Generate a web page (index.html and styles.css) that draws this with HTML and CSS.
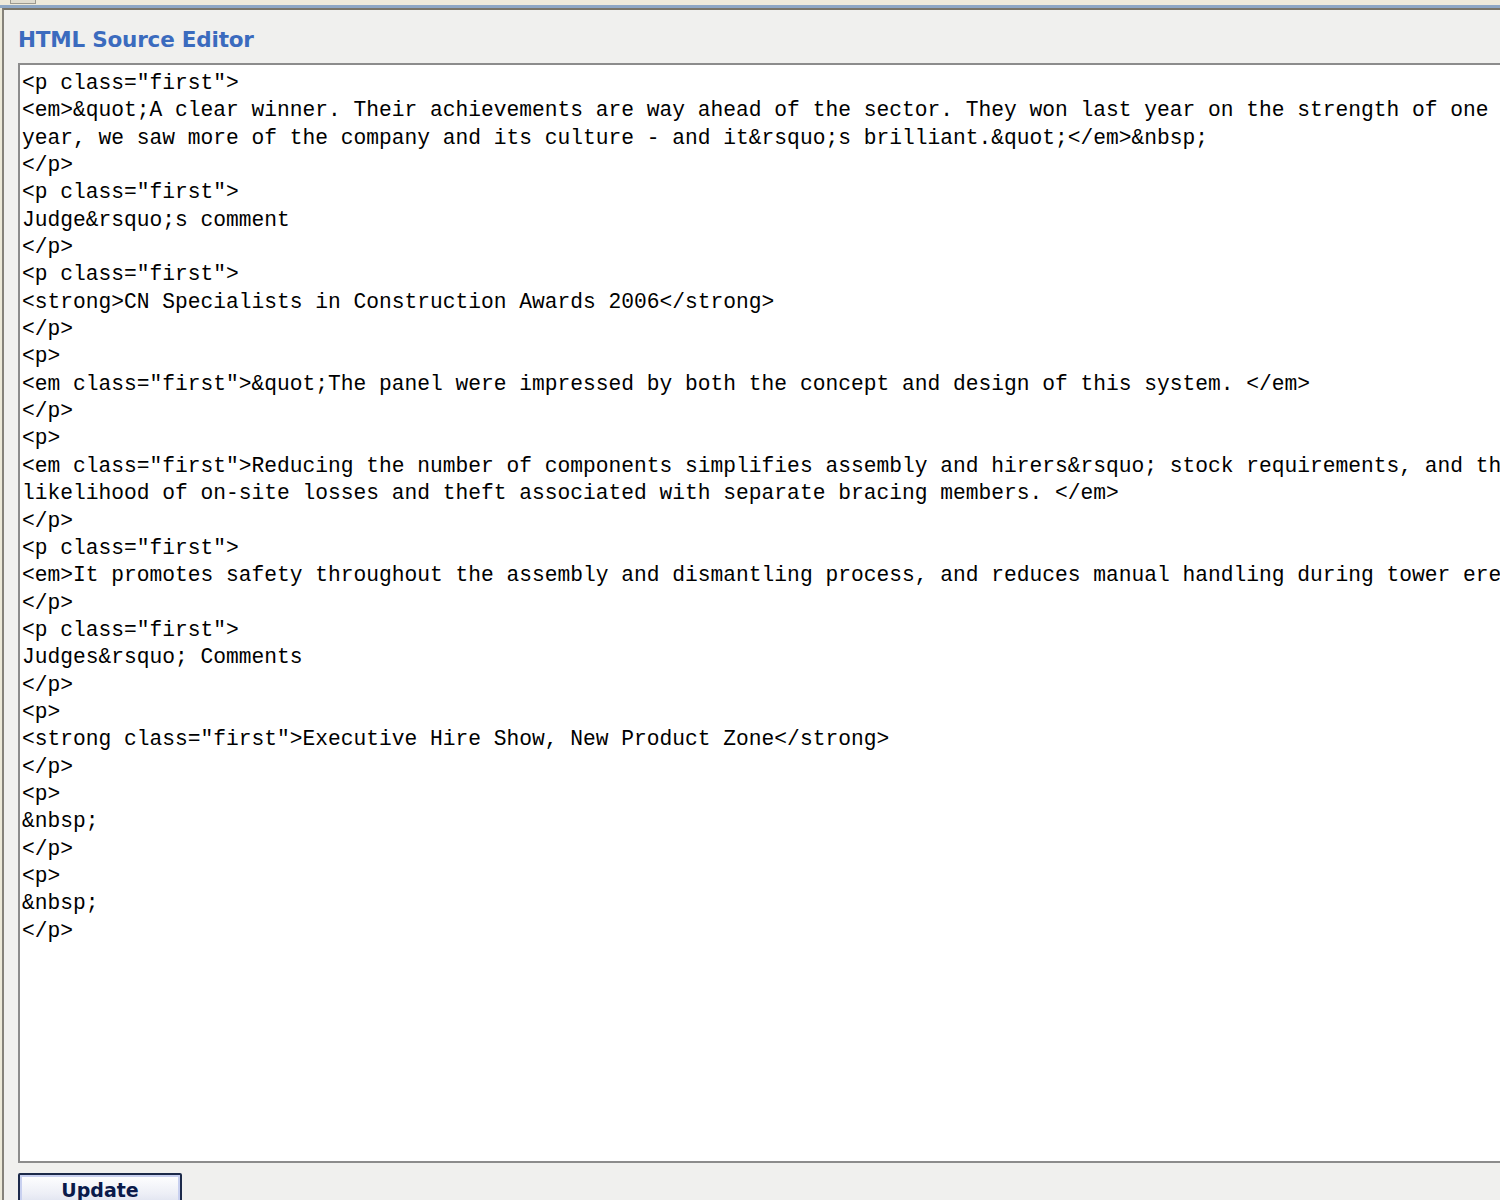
FILE: index.html
```html
<!DOCTYPE html>
<html>
<head>
<meta charset="UTF-8">
<title>HTML Source Editor</title>
<link rel="stylesheet" href="styles.css">
</head>
<body>
	<div class="topbar">
		<div class="tab"></div>
	</div>
	<div class="frame">
		<div class="panel">
			<h1 class="title">HTML Source Editor</h1>
			<div class="source">&lt;p class="first"&gt;
&lt;em&gt;&amp;quot;A clear winner. Their achievements are way ahead of the sector. They won last year on the strength of one
year, we saw more of the company and its culture - and it&amp;rsquo;s brilliant.&amp;quot;&lt;/em&gt;&amp;nbsp;
&lt;/p&gt;
&lt;p class="first"&gt;
Judge&amp;rsquo;s comment
&lt;/p&gt;
&lt;p class="first"&gt;
&lt;strong&gt;CN Specialists in Construction Awards 2006&lt;/strong&gt;
&lt;/p&gt;
&lt;p&gt;
&lt;em class="first"&gt;&amp;quot;The panel were impressed by both the concept and design of this system. &lt;/em&gt;
&lt;/p&gt;
&lt;p&gt;
&lt;em class="first"&gt;Reducing the number of components simplifies assembly and hirers&amp;rsquo; stock requirements, and the
likelihood of on-site losses and theft associated with separate bracing members. &lt;/em&gt;
&lt;/p&gt;
&lt;p class="first"&gt;
&lt;em&gt;It promotes safety throughout the assembly and dismantling process, and reduces manual handling during tower erection.&lt;/em&gt;
&lt;/p&gt;
&lt;p class="first"&gt;
Judges&amp;rsquo; Comments
&lt;/p&gt;
&lt;p&gt;
&lt;strong class="first"&gt;Executive Hire Show, New Product Zone&lt;/strong&gt;
&lt;/p&gt;
&lt;p&gt;
&amp;nbsp;
&lt;/p&gt;
&lt;p&gt;
&amp;nbsp;
&lt;/p&gt;</div>
			<div class="actions">
				<button class="update">Update</button>
			</div>
		</div>
	</div>
</body>
</html>
```

FILE: styles.css
```css
/* whole page */
html, body {
	margin: 0;
	padding: 0;
	background-color: #ECE9D8;
	overflow: hidden;
}

body {
	width: 1500px;
	height: 1200px;
}

.topbar {
	height: 5px;
	background-color: #EEEADA;
	border-bottom: 3px solid #8EA7C4;
	position: relative;
}

.tab {
	position: absolute;
	left: 10px;
	top: 0;
	width: 24px;
	height: 3px;
	border: 1px solid #9C9A90;
	border-top: none;
	background-color: #E0DDD0;
}

.frame {
	border-top: 2px solid #7A7668;
	border-left: 2px solid #85827A;
	margin-left: 2px;
	height: 1190px;
	background-color: #F0F0EE;
}

.panel {
	padding: 15px 0 0 14px;
	display: flex;
	flex-direction: column;
}

.title {
	margin: 0 0 8px 0;
	font-family: "DejaVu Sans", Verdana, sans-serif;
	font-size: 21.5px;
	font-weight: bold;
	color: #3B6BBE;
	line-height: 30px;
	letter-spacing: -0.2px;
}

.source {
	box-sizing: border-box;
	width: 1520px;
	height: 1100px;
	background-color: white;
	border: 2px solid #8C8C8C;
	border-right: none;
	padding: 5px 0 0 2px;
	font-family: "Liberation Mono", "Courier New", monospace;
	font-size: 21.25px;
	line-height: 27.35px;
	color: black;
	white-space: pre;
	overflow: hidden;
}

.actions {
	padding-top: 10px;
}

.update {
	width: 164px;
	height: 36px;
	border: 2px solid #1C2A4A;
	border-radius: 2px;
	background: linear-gradient(#FFFFFF, #ECEEF6 60%, #D9DDEC);
	box-shadow: inset 0 0 0 2px #C8D0F0;
	font-family: "DejaVu Sans", Tahoma, sans-serif;
	font-size: 19px;
	font-weight: bold;
	color: #0A1A4A;
	padding: 0 0 2px 0;
	line-height: 28px;
	text-align: center;
	vertical-align: top;
}
```
